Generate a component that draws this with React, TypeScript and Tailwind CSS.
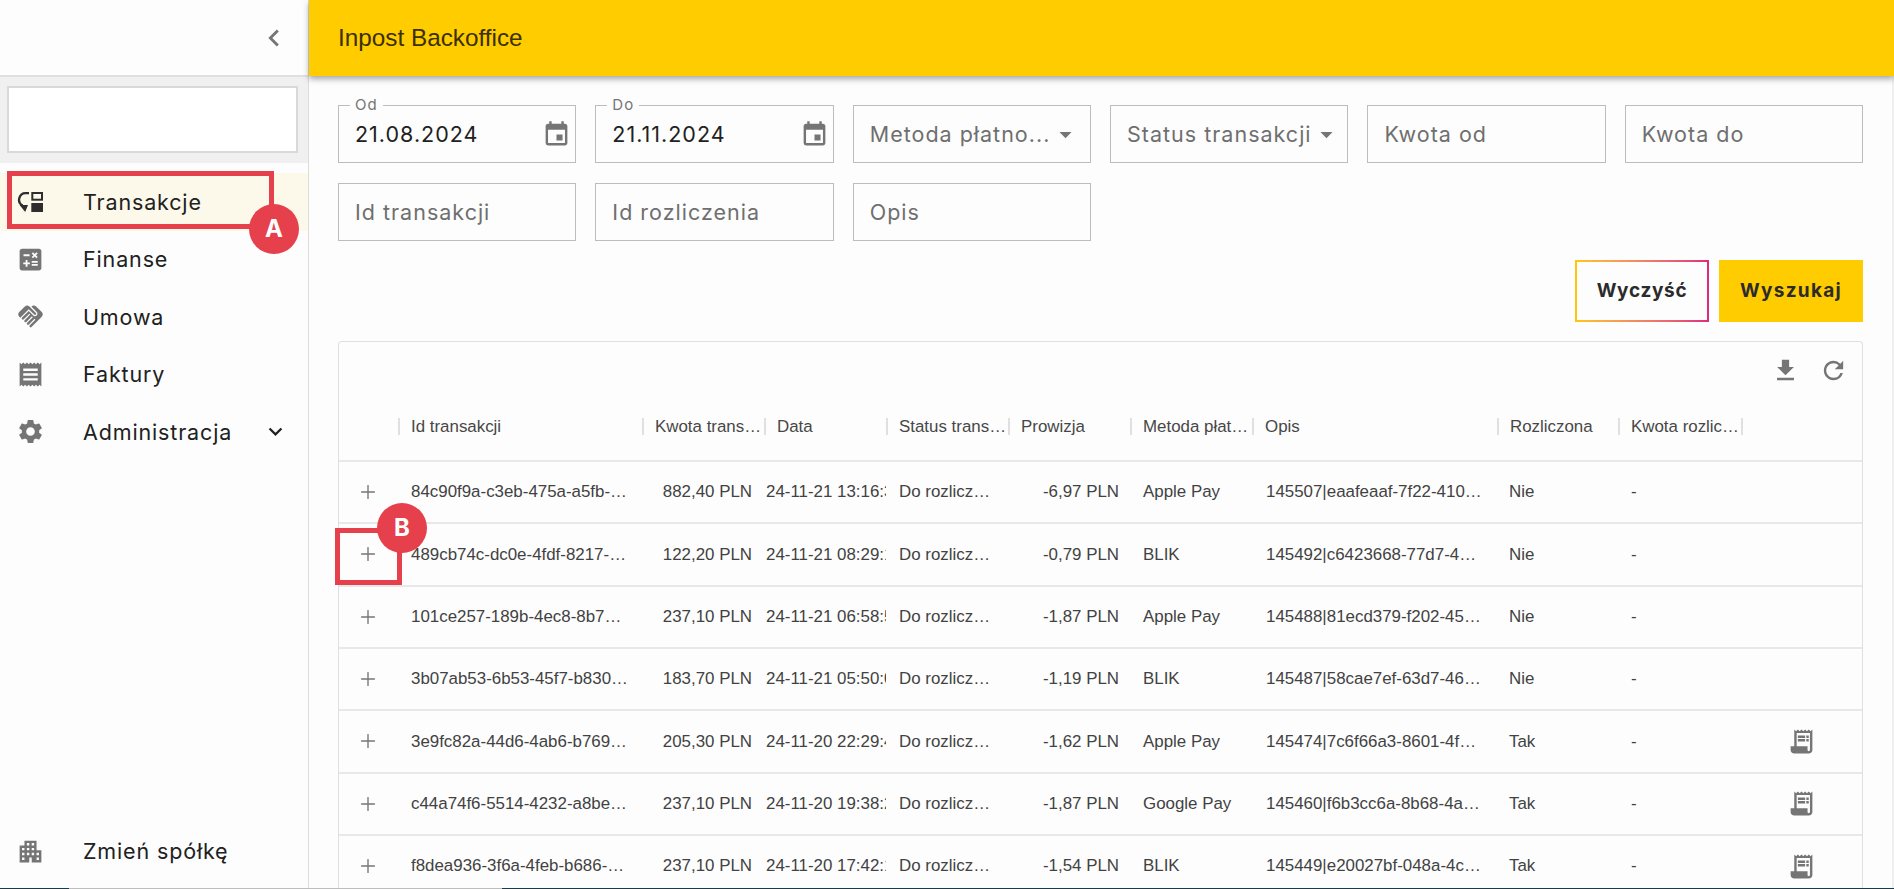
import {
	MdApartment,
	MdArrowDropDown,
	MdCalculate,
	MdChevronLeft,
	MdEvent,
	MdExpandMore,
	MdFileDownload,
	MdHandshake,
	MdReceipt,
	MdReceiptLong,
	MdRefresh,
	MdSettings,
} from "react-icons/md";
import { Plus } from "lucide-react";

const rows = [
	["84c90f9a-c3eb-475a-a5fb-8c21d7e0", "882,40 PLN", "24-11-21 13:16:33", "-6,97 PLN", "Apple Pay", "145507|eaafeaaf-7f22-4107-9c1b", "Nie", false],
	["489cb74c-dc0e-4fdf-8217-a1f09b3c", "122,20 PLN", "24-11-21 08:29:14", "-0,79 PLN", "BLIK", "145492|c6423668-77d7-4e0c-b1aa", "Nie", false],
	["101ce257-189b-4ec8-8b7e-65d2e0aa", "237,10 PLN", "24-11-21 06:58:52", "-1,87 PLN", "Apple Pay", "145488|81ecd379-f202-4511-8d3e", "Nie", false],
	["3b07ab53-6b53-45f7-b830-2ce1974d", "183,70 PLN", "24-11-21 05:50:07", "-1,19 PLN", "BLIK", "145487|58cae7ef-63d7-4620-a9c4", "Nie", false],
	["3e9fc82a-44d6-4ab6-b769-0fd3318e", "205,30 PLN", "24-11-20 22:29:41", "-1,62 PLN", "Apple Pay", "145474|7c6f66a3-8601-4f2e-92b7", "Tak", true],
	["c44a74f6-5514-4232-a8be-7719c0d2", "237,10 PLN", "24-11-20 19:38:26", "-1,87 PLN", "Google Pay", "145460|f6b3cc6a-8b68-4a71-b05d", "Tak", true],
	["f8dea936-3f6a-4feb-b686-e42a9013", "237,10 PLN", "24-11-20 17:42:18", "-1,54 PLN", "BLIK", "145449|e20027bf-048a-4c36-8fd1", "Tak", true],
] as const;

const headers = [
	{ label: "", width: "w-[59px]" },
	{ label: "Id transakcji", width: "w-[244px]" },
	{ label: "Kwota transakcji", width: "w-[122px]" },
	{ label: "Data", width: "w-[122px]" },
	{ label: "Status transakcji", width: "w-[122px]" },
	{ label: "Prowizja", width: "w-[122px]" },
	{ label: "Metoda płatności", width: "w-[122px]" },
	{ label: "Opis", width: "w-[245px]" },
	{ label: "Rozliczona", width: "w-[121px]" },
	{ label: "Kwota rozliczenia", width: "w-[123px]" },
	{ label: "", width: "w-[123px]" },
];

function TransactionsIcon() {
	return (
		<svg width="26" height="21" viewBox="0 0 26 21" fill="none" className="ml-px text-[#2e2e2e]">
			<path d="M12 2.2 H9.2 A6.6 6.6 0 0 0 5.6 14.6" stroke="currentColor" strokeWidth="2.3" />
			<path d="M2.6 14 L11 14 L8.2 21 Z" fill="currentColor" />
			<rect x="15.3" y="2" width="9.7" height="6.7" stroke="currentColor" strokeWidth="2" />
			<rect x="14.3" y="12" width="11.7" height="9" fill="currentColor" />
		</svg>
	);
}

function NavItem({
	icon,
	label,
	active = false,
	trailing,
}: {
	icon: React.ReactNode;
	label: string;
	active?: boolean;
	trailing?: React.ReactNode;
}) {
	return (
		<div className={`flex items-center h-[57.5px] ${active ? "bg-[#fdf9ea]" : ""}`}>
			<div className="w-[83px] pl-[16px] text-[#757575] flex items-center">{icon}</div>
			<span className="font-['Inter',sans-serif] text-[21.5px] tracking-[0.85px] text-[#212121]">{label}</span>
			{trailing}
		</div>
	);
}

function Field({
	placeholder,
	label,
	value,
	icon,
}: {
	placeholder?: string;
	label?: string;
	value?: string;
	icon?: React.ReactNode;
}) {
	return (
		<div className="relative h-[58px] border border-[#bdbdbd] flex items-center justify-between pl-4 pr-1.5 font-['Inter',sans-serif] text-[21.5px] tracking-[1px]">
			{label && (
				<span className="absolute -top-[11px] left-[11px] bg-[#fdfdfd] px-[5px] text-[15px] leading-[20px] text-[#757575]">
					{label}
				</span>
			)}
			{value ? (
				<span className="text-[#212121]">{value}</span>
			) : (
				<span className="text-[#6f6f6f] whitespace-nowrap">{placeholder}</span>
			)}
			{icon}
		</div>
	);
}

function Cell({
	width,
	children,
	className = "",
}: {
	width: string;
	children?: React.ReactNode;
	className?: string;
}) {
	return <div className={`${width} shrink-0 overflow-hidden whitespace-nowrap ${className}`}>{children}</div>;
}

export default function App() {
	return (
		<div className="w-[1894px] h-[889px] overflow-hidden flex flex-col bg-[#fdfdfd] font-['Liberation_Sans',sans-serif]">
			<div className="flex flex-1 min-h-0">
				<aside className="w-[309px] shrink-0 border-r border-[#dcdcdc] flex flex-col">
					<div className="h-[77px] shrink-0 border-b-2 border-[#e0e0e0] flex items-center justify-end pr-[17px] text-[#757575]">
						<MdChevronLeft size={34} />
					</div>
					<div className="h-[86px] shrink-0 bg-[#f0f0f0] px-[7px] pt-[9px]">
						<div className="w-[291px] h-[67px] bg-white border-2 border-[#d9d9d9]" />
					</div>
					<nav className="pt-[10px] flex-1 flex flex-col">
						<NavItem active icon={<TransactionsIcon />} label="Transakcje" />
						<NavItem icon={<MdCalculate size={29} />} label="Finanse" />
						<NavItem icon={<MdHandshake size={29} />} label="Umowa" />
						<NavItem icon={<MdReceipt size={29} />} label="Faktury" />
						<NavItem
							icon={<MdSettings size={29} />}
							label="Administracja"
							trailing={<MdExpandMore size={27} className="ml-auto mr-[19px] text-[#212121]" />}
						/>
						<div className="mt-auto mb-[8px]">
							<NavItem icon={<MdApartment size={29} />} label="Zmień spółkę" />
						</div>
					</nav>
				</aside>

				<main className="flex-1 min-w-0 flex flex-col">
					<header className="h-[76px] shrink-0 bg-[#ffcc00] flex items-center pl-[29px] shadow-[0_3px_6px_rgba(0,0,0,0.35)] relative z-10">
						<h1 className="text-[24.3px] text-[#3a3000]">Inpost Backoffice</h1>
					</header>

					<div className="flex-1 min-h-0 pl-[29px] pr-[29px] border-r-2 border-[#efefef] flex flex-col">
						<div className="pt-[29px] grid grid-cols-6 gap-x-[19.2px] gap-y-[20px]">
							<Field label="Od" value="21.08.2024" icon={<MdEvent size={29} className="text-[#757575] -mr-[2px]" />} />
							<Field label="Do" value="21.11.2024" icon={<MdEvent size={29} className="text-[#757575] -mr-[2px]" />} />
							<Field
								placeholder="Metoda płatno..."
								icon={<MdArrowDropDown size={29} className="text-[#757575] shrink-0 mr-[4px]" />}
							/>
							<Field
								placeholder="Status transakcji"
								icon={<MdArrowDropDown size={29} className="text-[#757575] shrink-0 mr-[4px]" />}
							/>
							<Field placeholder="Kwota od" />
							<Field placeholder="Kwota do" />
							<Field placeholder="Id transakcji" />
							<Field placeholder="Id rozliczenia" />
							<Field placeholder="Opis" />
						</div>

						<div className="mt-[19px] flex justify-end gap-[10px] font-['Inter',sans-serif] text-[19px] font-bold text-[#2b2b2b]">
							<div className="w-[134px] h-[62px] p-[2px] bg-gradient-to-r from-[#ffc700] to-[#dd2a7b]">
								<button className="w-full h-full bg-[#fdfdfd] font-bold tracking-[0.7px]">Wyczyść</button>
							</div>
							<button className="w-[144px] h-[62px] bg-[#ffcc00] font-bold tracking-[1.3px]">Wyszukaj</button>
						</div>

						<section className="mt-[19px] flex-1 min-h-0 overflow-hidden border border-b-0 border-[#e0e0e0] rounded-t-[4px] text-[16.9px] text-[#424242]">
							<div className="h-[59px] flex items-center justify-end gap-[19px] pr-[14px] pb-[3px] text-[#757575]">
								<MdFileDownload size={29} />
								<MdRefresh size={29} />
							</div>

							<div className="h-[61px] flex items-center border-b-2 border-[#e8e8e8] pb-[8px]">
								{headers.map((h, i) => (
									<div key={i} className={`${h.width} shrink-0 flex items-center h-[17px]`}>
										{i > 0 && <div className="w-[2px] h-[17px] shrink-0 bg-[#e0e0e0]" />}
										<span className="pl-[11px] pr-[1px] truncate text-[16.9px] text-[#474747]">{h.label}</span>
									</div>
								))}
							</div>

							{rows.map((r, i) => (
								<div key={i} className="h-[62.33px] flex items-center border-b-2 border-[#e8e8e8]">
									<Cell width="w-[59px]" className="pl-[18px] text-[#757575]">
										<Plus size={22} strokeWidth={1.5} />
									</Cell>
									<Cell width="w-[244px]" className="pl-[13px] pr-[13px] truncate">
										{r[0]}
									</Cell>
									<Cell width="w-[122px]" className="pr-[12px] text-right">
										{r[1]}
									</Cell>
									<Cell width="w-[122px]" className="pl-[2px]">
										{r[2]}
									</Cell>
									<Cell width="w-[122px]" className="pl-[13px] pr-[15px] truncate">
										Do rozliczenia
									</Cell>
									<Cell width="w-[122px]" className="pr-[11px] text-right">
										{r[3]}
									</Cell>
									<Cell width="w-[122px]" className="pl-[13px]">
										{r[4]}
									</Cell>
									<Cell width="w-[245px]" className="pl-[14px] pr-[13px] truncate">
										{r[5]}
									</Cell>
									<Cell width="w-[121px]" className="pl-[12px]">
										{r[6]}
									</Cell>
									<Cell width="w-[123px]" className="pl-[13px]">
										-
									</Cell>
									<Cell width="w-[123px]" className="pl-[46px] text-[#757575]">
										{r[7] && <MdReceiptLong size={29} />}
									</Cell>
								</div>
							))}
						</section>
					</div>
				</main>
			</div>

			<div className="h-px shrink-0 flex">
				<div className="w-[69px] bg-[#1d3a47]" />
				<div className="w-[433px] bg-[#bdbdbd]" />
				<div className="flex-1 bg-[#1d3a47]" />
			</div>

			{/* callouts from the doc screenshot, they sit on top of the app */}
			<div className="absolute left-[7px] top-[171px] w-[267px] h-[58px] border-[5px] border-[#e5404b]" />
			<div className="absolute left-[249px] top-[204px] w-[50px] h-[50px] rounded-full bg-[#e5404b] text-white font-['Inter',sans-serif] font-bold text-[24px] flex items-center justify-center">
				A
			</div>
			<div className="absolute left-[335px] top-[528px] w-[67px] h-[57px] border-[5px] border-[#e5404b]" />
			<div className="absolute left-[377px] top-[503px] w-[50px] h-[50px] rounded-full bg-[#e5404b] text-white font-['Inter',sans-serif] font-bold text-[24px] flex items-center justify-center">
				B
			</div>
		</div>
	);
}
